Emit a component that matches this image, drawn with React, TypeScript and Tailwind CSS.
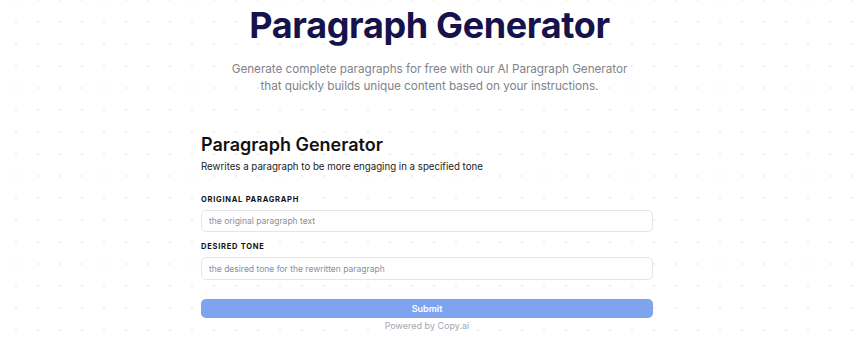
import { useState } from 'react';

export default function App() {
  const [paragraph, setParagraph] = useState('');
  const [tone, setTone] = useState('');

  return (
    <div
      className="min-h-[337px] w-full bg-white bg-[radial-gradient(circle,#efefef_1px,transparent_1.2px)] bg-size-[22px_22px] bg-position-[5px_11px]"
      style={{ fontFamily: 'Inter, "Noto Sans", sans-serif' }}
    >
      <header className="flex flex-col items-center pt-[3px]">
        <h1 className="text-[36px] leading-[44px] font-bold tracking-[-0.01em] text-[#16124b]">Paragraph Generator</h1>
        <p className="mt-[14px] text-center text-[11.75px] leading-[17px] tracking-[-0.005em] text-[#80848c]">
          Generate complete paragraphs for free with our AI Paragraph Generator
          <br />
          that quickly builds unique content based on your instructions.
        </p>
      </header>

      <main className="mx-auto mt-[38px] w-[457px] pr-[5px]">
        <h2 className="text-[18px] leading-[24px] font-semibold text-[#111]">Paragraph Generator</h2>
        <p className="mt-[3px] text-[9.7px] leading-[14px] text-[#222]">Rewrites a paragraph to be more engaging in a specified tone</p>

        <div className="mt-[21px]">
          <label className="block text-[7.5px] leading-[10px] font-bold tracking-[0.1em] text-[#111]">ORIGINAL PARAGRAPH</label>
          <input
            value={paragraph}
            onChange={(e) => setParagraph(e.target.value)}
            placeholder="the original paragraph text"
            className="mt-[5px] h-[22px] w-full rounded-[5px] border border-[#e3e5e8] bg-white px-[7px] text-[8.5px] text-[#333] outline-none placeholder:text-[#8a8f98]"
          />
        </div>

        <div className="mt-[10px]">
          <label className="block text-[7.5px] leading-[10px] font-bold tracking-[0.1em] text-[#111]">DESIRED TONE</label>
          <input
            value={tone}
            onChange={(e) => setTone(e.target.value)}
            placeholder="the desired tone for the rewritten paragraph"
            className="mt-[5px] h-[23px] w-full rounded-[5px] border border-[#e3e5e8] bg-white px-[7px] text-[8.5px] text-[#333] outline-none placeholder:text-[#8a8f98]"
          />
        </div>

        <button
          type="button"
          className="mt-[19px] h-[19px] w-full rounded-[5px] bg-[#7ea4f0] text-[9px] leading-[19px] font-semibold text-white"
        >
          Submit
        </button>
        <p className="mt-[2px] text-center text-[9px] leading-[12px] text-[#a3a7ae]">Powered by Copy.ai</p>
      </main>
    </div>
  );
}
